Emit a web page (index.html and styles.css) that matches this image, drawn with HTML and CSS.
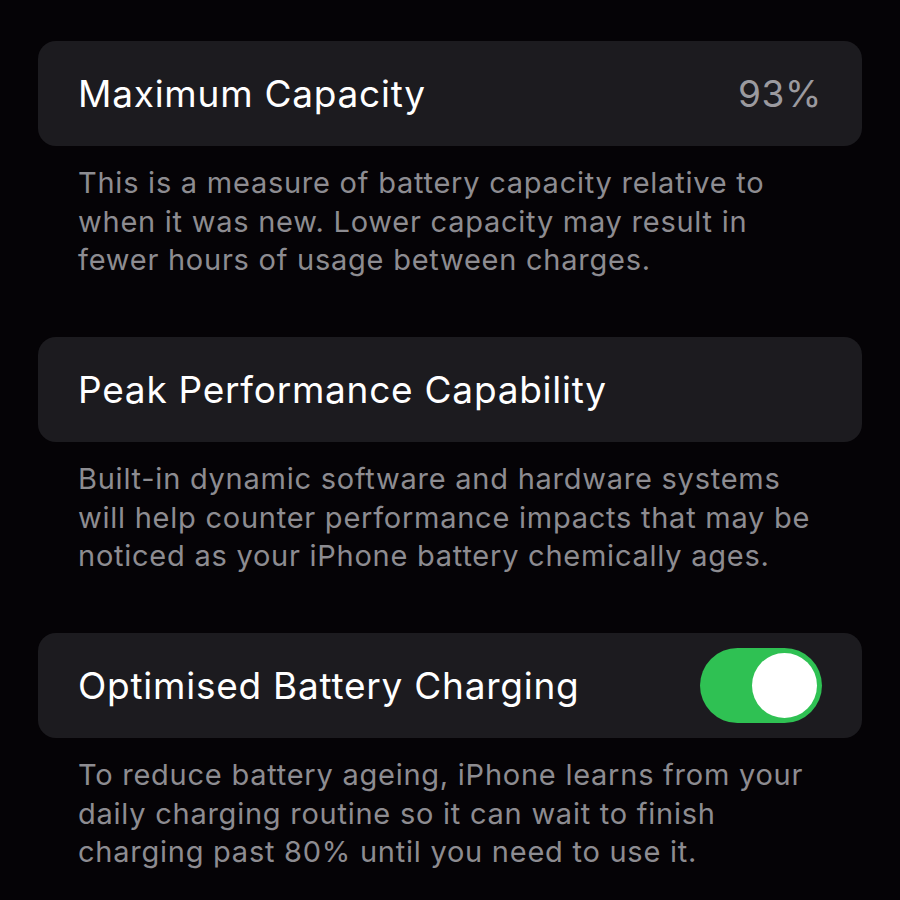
FILE: index.html
```html
<!DOCTYPE html>
<html lang="en">
<head>
    <meta charset="UTF-8">
    <title>Battery Health</title>
    <link rel="stylesheet" href="styles.css">
</head>
<body>

<div class="screen">
    <div class="group">
        <div class="cell">
            <span class="label">Maximum Capacity</span>
            <span class="value">93%</span>
        </div>
        <p class="footer">This is a measure of battery capacity relative to<br>when it was new. Lower capacity may result in<br>fewer hours of usage between charges.</p>
    </div>

    <div class="group">
        <div class="cell">
            <span class="label">Peak Performance Capability</span>
        </div>
        <p class="footer">Built-in dynamic software and hardware systems<br>will help counter performance impacts that may be<br>noticed as your iPhone battery chemically ages.</p>
    </div>

    <div class="group">
        <div class="cell">
            <span class="label">Optimised Battery Charging</span>
            <div class="toggle on"><div class="knob"></div></div>
        </div>
        <p class="footer">To reduce battery ageing, iPhone learns from your<br>daily charging routine so it can wait to finish<br>charging past 80% until you need to use it.</p>
    </div>
</div>

</body>
</html>
```

FILE: styles.css
```css
body {
    margin: 0;
    padding: 0;
    background: #050306;
    font-family: 'Inter', 'Roboto', sans-serif;
    width: 900px;
    height: 900px;
    overflow: hidden;
}
.screen {
    padding: 41px 38px 0 38px;
    display: flex;
    flex-direction: column;
    gap: 57.5px;
}
.cell {
    height: 105px;
    background: #1c1b1f;
    border-radius: 18px;
    padding: 0 40px;
    display: flex;
    align-items: center;
    justify-content: space-between;
}
.label {
    color: #fff;
    font-size: 37px;
    letter-spacing: 0.75px;
}
.value {
    color: #9b9a9f;
    font-size: 37px;
    letter-spacing: 0.6px;
}
.footer {
    margin: 0;
    padding: 18px 40px 0 40px;
    color: #8d8c91;
    font-size: 29px;
    line-height: 38.5px;
    letter-spacing: 0.75px;
    white-space: nowrap;
}
.toggle {
    width: 122px;
    height: 75px;
    border-radius: 38px;
    background: #2fc153;
    position: relative;
}
.knob {
    position: absolute;
    top: 5px;
    right: 5px;
    width: 65px;
    height: 65px;
    border-radius: 50%;
    background: #fff;
}
```
